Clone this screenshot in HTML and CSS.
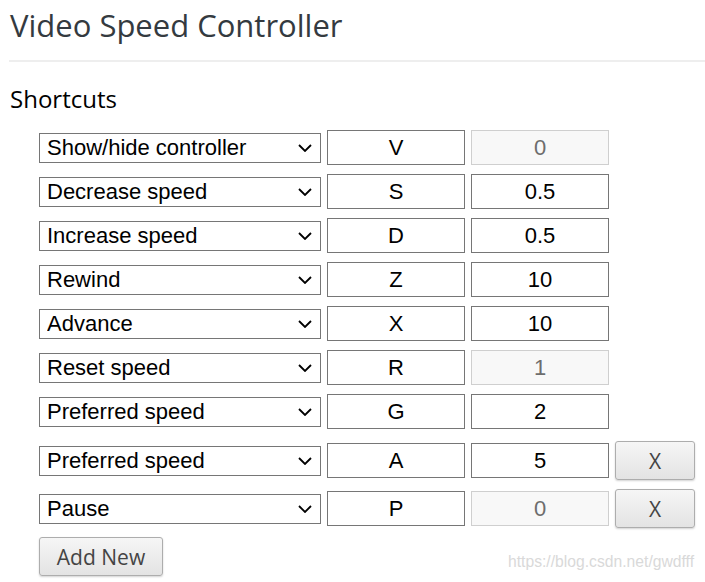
FILE: index.html
```html
<!DOCTYPE html>
<html>
<head>
<meta charset="utf-8">
<link rel="stylesheet" href="styles.css">
</head>
<body>
<h1 class="title">Video Speed Controller</h1>
<h3 class="section">Shortcuts</h3>
<div class="shortcuts">
  <div class="row">
    <select class="action"><option>Show/hide controller</option></select>
    <input class="key" type="text" value="V">
    <input class="value" type="text" value="0" disabled>
  </div>
  <div class="row">
    <select class="action"><option>Decrease speed</option></select>
    <input class="key" type="text" value="S">
    <input class="value" type="text" value="0.5">
  </div>
  <div class="row">
    <select class="action"><option>Increase speed</option></select>
    <input class="key" type="text" value="D">
    <input class="value" type="text" value="0.5">
  </div>
  <div class="row">
    <select class="action"><option>Rewind</option></select>
    <input class="key" type="text" value="Z">
    <input class="value" type="text" value="10">
  </div>
  <div class="row">
    <select class="action"><option>Advance</option></select>
    <input class="key" type="text" value="X">
    <input class="value" type="text" value="10">
  </div>
  <div class="row">
    <select class="action"><option>Reset speed</option></select>
    <input class="key" type="text" value="R">
    <input class="value" type="text" value="1" disabled>
  </div>
  <div class="row">
    <select class="action"><option>Preferred speed</option></select>
    <input class="key" type="text" value="G">
    <input class="value" type="text" value="2">
  </div>
  <div class="row row-removable first-removable">
    <select class="action"><option>Preferred speed</option></select>
    <input class="key" type="text" value="A">
    <input class="value" type="text" value="5">
    <button class="btn remove">X</button>
  </div>
  <div class="row row-removable">
    <select class="action"><option>Pause</option></select>
    <input class="key" type="text" value="P">
    <input class="value" type="text" value="0" disabled>
    <button class="btn remove">X</button>
  </div>
  <button class="btn add">Add New</button>
</div>
<div class="watermark">https://blog.csdn.net/gwdfff</div>
</body>
</html>
```
FILE: styles.css
```css
html, body {
  margin: 0;
  padding: 0;
  background: #fff;
}
body {
  padding: 0 0 0 9px;
  font-family: "Open Sans", "Noto Sans", sans-serif;
  position: relative;
  height: 582px;
  box-sizing: border-box;
  overflow: hidden;
}
.title {
  margin: 0;
  padding: 5px 0 15px 1px;
  font-size: 31px;
  font-weight: 400;
  line-height: 40px;
  color: #343a40;
  border-bottom: 2px solid #eeeeee;
}
.section {
  margin: 22px 0 0 1px;
  font-size: 24px;
  font-weight: 400;
  line-height: 30px;
  color: #000;
}
.shortcuts {
  padding: 16px 0 0 30px;
}
.row {
  display: flex;
  align-items: center;
  gap: 6px;
  height: 35px;
  margin-bottom: 9px;
}
.row-removable {
  height: 39px;
}
.first-removable {
  margin-top: 12px;
}
.action {
  appearance: none;
  -webkit-appearance: none;
  width: 282px;
  height: 30px;
  margin: 0;
  padding: 0 24px 0 7px;
  border: 1px solid #767676;
  border-radius: 0;
  background: #fff url("data:image/svg+xml;utf8,<svg xmlns='http://www.w3.org/2000/svg' width='14' height='8' viewBox='0 0 14 8'><path d='M1 1 L7 7 L13 1' fill='none' stroke='%23000' stroke-width='1.8'/></svg>") no-repeat right 8px center;
  font-family: "Liberation Sans", Arial, sans-serif;
  font-size: 22px;
  color: #000;
  box-sizing: border-box;
}
.key, .value {
  width: 138px;
  height: 35px;
  margin: 0;
  padding: 0;
  border: 1px solid #767676;
  border-radius: 0;
  box-sizing: border-box;
  font-family: "Liberation Sans", Arial, sans-serif;
  font-size: 22px;
  text-align: center;
  color: #000;
  background: #fff;
}
.value:disabled {
  background: #f8f8f8;
  border-color: #cfcfcf;
  color: #6d6d6d;
}
.btn {
  margin: 0;
  padding: 0;
  border: 1px solid #adadad;
  border-radius: 3px;
  background: linear-gradient(#f6f6f6, #e3e3e3);
  box-shadow: 0 1px 2px rgba(0,0,0,0.18);
  font-family: "Open Sans", "Noto Sans", sans-serif;
  font-size: 21px;
  color: #444;
  box-sizing: border-box;
}
.remove {
  width: 80px;
  height: 39px;
}
.add {
  display: block;
  width: 124px;
  height: 39px;
  margin-top: 8px;
}
.watermark {
  position: absolute;
  left: 508px;
  top: 553px;
  font-family: "Liberation Sans", Arial, sans-serif;
  font-size: 15.7px;
  color: #d9d9d9;
}
```
